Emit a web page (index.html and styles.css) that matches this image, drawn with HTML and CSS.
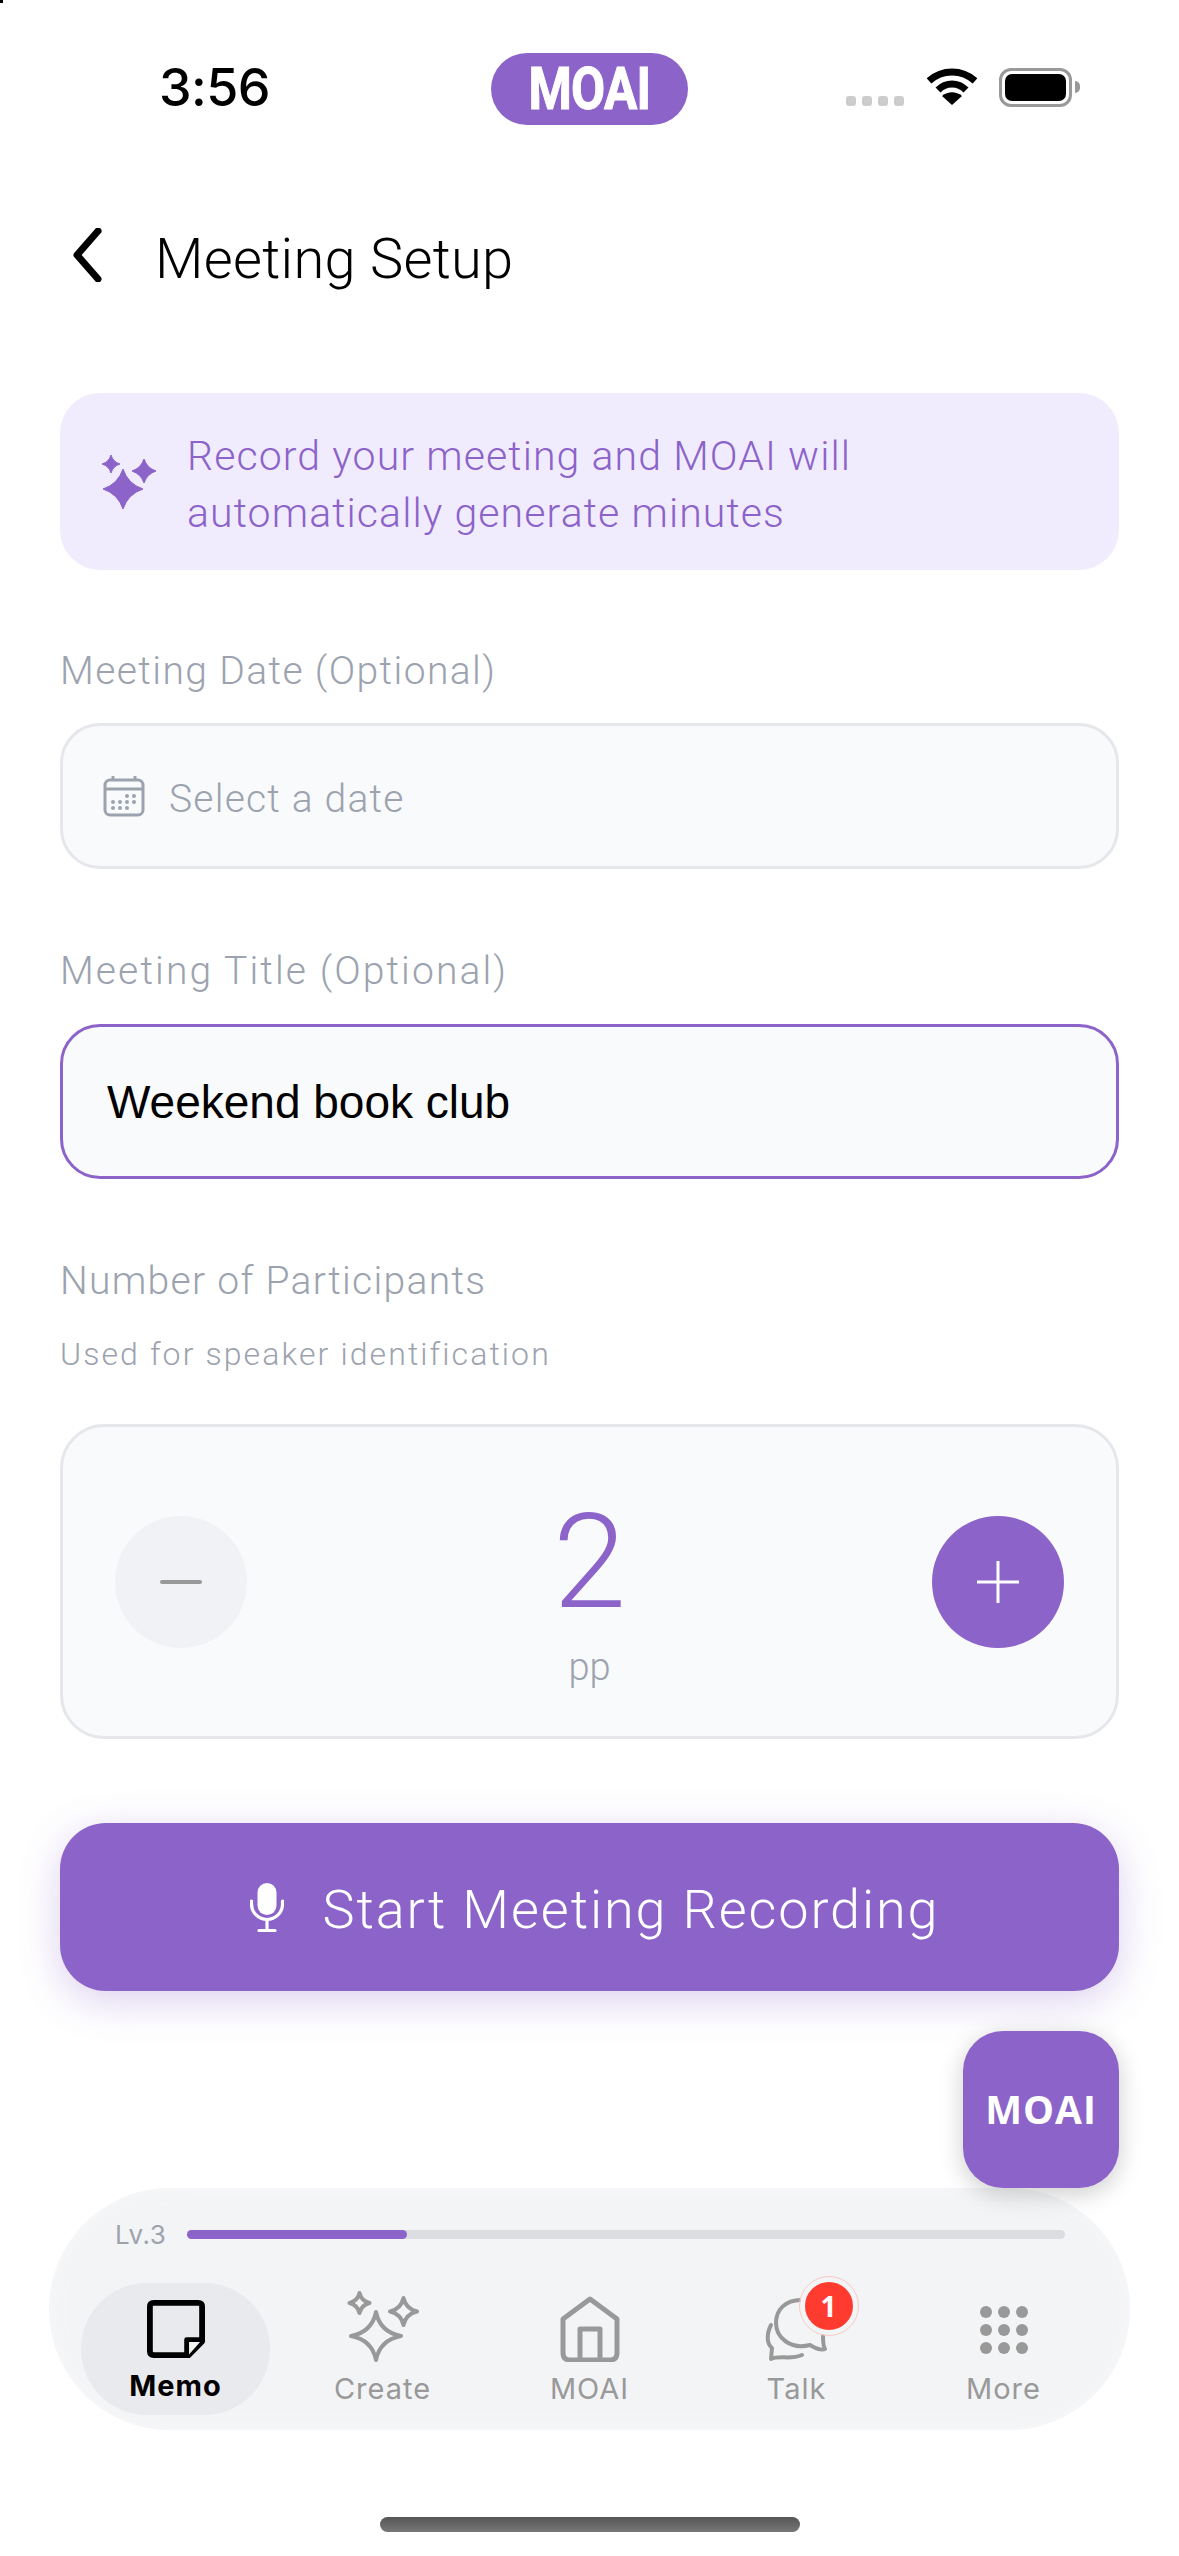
FILE: index.html
```html
<!DOCTYPE html>
<html lang="en">
<head>
  <meta charset="UTF-8" />
  <meta name="viewport" content="width=device-width, initial-scale=1.0"/>
  <title>Meeting Setup</title>
  <link rel="stylesheet" href="styles.css">
</head>
<body>
  <div class="pixel"></div>
  <div class="status-bar">
    <div class="hora">3:56</div>
    <div class="logo-pill"><span>MOAI</span></div>
    <div class="status-icons">
      <div class="senal"><i></i><i></i><i></i><i></i></div>
      <svg class="wifi" width="50" height="38" viewBox="0 0 50 38">
        <path d="M2 13 C15 1 35 1 48 13" fill="none" stroke="#000" stroke-width="7"/>
        <path d="M11 22 C19 14 31 14 39 22" fill="none" stroke="#000" stroke-width="7"/>
        <path d="M25 37 L15 28 C21 23 29 23 35 28 Z" fill="#000"/>
      </svg>
      <div class="bateria"><div class="bateria-fill"></div></div>
      <div class="bateria-tip"></div>
    </div>
  </div>

  <header class="cabecera">
    <svg width="30" height="54" viewBox="0 0 30 54"><path d="M26 3 L5 27 L26 51" fill="none" stroke="#000" stroke-width="7" stroke-linecap="round" stroke-linejoin="round"/></svg>
    <h1>Meeting Setup</h1>
  </header>

  <main class="contenedor">
    <div class="aviso">
      <svg width="54" height="54" viewBox="0 0 54 54" fill="#8c63c9" stroke="#8c63c9" stroke-width="1" stroke-linejoin="round">
        <path d="M21 14 Q26 29 41 34 Q26 39 21 54 Q16 39 1 34 Q16 29 21 14 Z"/>
        <path d="M9 0 Q11 7 18 9 Q11 11 9 18 Q7 11 0 9 Q7 7 9 0 Z"/>
        <path d="M42 4 Q45 13 54 16 Q45 19 42 28 Q39 19 30 16 Q39 13 42 4 Z"/>
      </svg>
      <p>Record your meeting and MOAI will<br>automatically generate minutes</p>
    </div>

    <label class="etiqueta etiqueta-fecha">Meeting Date (Optional)</label>
    <div class="campo campo-fecha">
      <svg width="42" height="42" viewBox="0 0 42 42" fill="none" stroke="#9ca3af" stroke-width="3">
        <rect x="2" y="5" width="38" height="35" rx="5"/>
        <path d="M2 14 H40 M10 1 V6 M32 1 V6"/>
        <g fill="#9ca3af" stroke="none">
          <circle cx="24" cy="21" r="2"/><circle cx="31" cy="21" r="2"/>
          <circle cx="10" cy="27" r="2"/><circle cx="17" cy="27" r="2"/><circle cx="24" cy="27" r="2"/><circle cx="31" cy="27" r="2"/>
          <circle cx="10" cy="33" r="2"/><circle cx="17" cy="33" r="2"/><circle cx="24" cy="33" r="2"/>
        </g>
      </svg>
      <span>Select a date</span>
    </div>

    <label class="etiqueta etiqueta-titulo">Meeting Title (Optional)</label>
    <div class="campo campo-titulo">Weekend book club</div>

    <label class="etiqueta etiqueta-numero">Number of Participants</label>
    <div class="ayuda">Used for speaker identification</div>

    <div class="contador">
      <div class="redondo redondo-menos"><svg width="42" height="6" viewBox="0 0 42 6"><rect width="42" height="4" y="1" rx="2" fill="#999"/></svg></div>
      <div class="contador-valor">
        <div class="numero">2</div>
        <div class="unidad">pp</div>
      </div>
      <div class="redondo redondo-mas"><svg width="42" height="42" viewBox="0 0 42 42"><path d="M0 21 H42 M21 0 V42" stroke="#fff" stroke-width="3"/></svg></div>
    </div>

    <button class="btn-grabar">
      <svg width="34" height="49" viewBox="0 0 34 49" fill="none">
        <rect x="7.5" y="0" width="19" height="32" rx="9.5" fill="#fff"/>
        <path d="M1.5 18 V21 A15.5 15.5 0 0 0 32.5 21 V18 M17 37 V47 M9 47.5 H25" stroke="#fff" stroke-width="3.2" stroke-linecap="round"/>
      </svg>
      <span>Start Meeting Recording</span>
    </button>
  </main>

  <div class="fab">MOAI</div>

  <nav class="barra-nav">
    <div class="nivel">
      <span>Lv.3</span>
      <div class="nivel-barra"><div class="nivel-fill"></div></div>
    </div>
    <div class="pestanas">
      <div class="pestana activa">
        <svg width="58" height="58" viewBox="0 0 60 60" fill="none" stroke="#000" stroke-width="6" stroke-linejoin="round">
          <path d="M7 3 H53 Q57 3 57 7 V43 L43 57 H7 Q3 57 3 53 V7 Q3 3 7 3 Z"/>
          <path d="M57 41 L43 57 V41 Z" fill="#f3f4f6" stroke="none"/>
          <path d="M57 41 H41 V57" stroke-width="5"/>
        </svg>
        <span>Memo</span>
      </div>
      <div class="pestana">
        <svg width="72" height="71" viewBox="0 0 72 71" fill="none" stroke="#999" stroke-width="4" stroke-linejoin="round">
          <path d="M29 21 Q33 41 54 45 Q33 49 29 69 Q25 49 4 45 Q25 41 29 21 Z"/>
          <path d="M12.5 2 Q14.5 10 22.5 12 Q14.5 14 12.5 22 Q10.5 14 2.5 12 Q10.5 10 12.5 2 Z"/>
          <path d="M56.5 7 Q59 18 70 20.5 Q59 23 56.5 34 Q54 23 43 20.5 Q54 18 56.5 7 Z"/>
        </svg>
        <span>Create</span>
      </div>
      <div class="pestana">
        <svg width="60" height="66" viewBox="0 0 60 66" fill="none" stroke="#999" stroke-width="5" stroke-linejoin="round">
          <path d="M30 3 L57 23 V57 Q57 64 50 64 H10 Q3 64 3 57 V23 Z"/>
          <path d="M20 64 V33 H40 V64"/>
        </svg>
        <span>MOAI</span>
      </div>
      <div class="pestana">
        <div class="icono-charla">
          <svg width="64" height="64" viewBox="0 0 64 64" fill="none" stroke="#999" stroke-width="4" stroke-linecap="round" stroke-linejoin="round">
            <path d="M36 2 C20 2 11 12 11 25 C11 40 26 52 45 47 C50 50 56 53 60 51 C58 48 58 44 58 38"/>
            <path d="M6 27 C1 37 2 46 7 50 L6 61 C14 57 26 62 37 57"/>
          </svg>
          <div class="globo">1</div>
        </div>
        <span>Talk</span>
      </div>
      <div class="pestana">
        <div class="puntos"><i></i><i></i><i></i><i></i><i></i><i></i><i></i><i></i><i></i></div>
        <span>More</span>
      </div>
    </div>
  </nav>

  <div class="home-indicator"></div>
</body>
</html>
```

FILE: styles.css
```css
/* ===== Base ===== */
* { margin:0; padding:0; box-sizing:border-box; }
html, body { height:100%; overflow:hidden; }
body {
  position:relative;
  background:#fff; color:#000;
  font-family:'Roboto', sans-serif;
  font-weight:300;
}
.pixel { position:absolute; left:0; top:0; width:3px; height:3px; background:#000; }

/* ===== Status bar ===== */
.status-bar { height:180px; padding:53px 98px 0 159px; display:flex; align-items:flex-start; }
.hora { font:500 52px/70px 'Inter', sans-serif; width:332px; letter-spacing:-.6px; }
.logo-pill {
  width:197px; height:72px; border-radius:36px;
  background:#8c63c9; color:#fff;
  display:flex; align-items:center; justify-content:center;
  font:700 59px/72px 'Roboto', sans-serif;
}
.logo-pill span { display:inline-block; transform:scaleX(.84); letter-spacing:-1px; -webkit-text-stroke:1px #fff; }
.status-icons { margin-left:158px; margin-top:15px; display:flex; align-items:flex-start; }
.senal { display:flex; gap:6px; margin-top:28px; margin-right:23px; }
.senal i { width:10px; height:10px; border-radius:3px; background:#ccc; }
.wifi { margin-right:22px; }
.bateria {
  width:73px; height:39px; padding:3px;
  border:3px solid #999; border-radius:12px; background:#fff;
}
.bateria-fill { width:100%; height:100%; background:#000; border-radius:7px; }
.bateria-tip { width:5px; height:12px; background:#999; border-radius:0 6px 6px 0; margin:13px 0 0 3px; }

/* ===== Cabecera ===== */
.cabecera { display:flex; align-items:center; gap:53px; padding:0 0 0 72px; height:110px; margin-top:20px; }
.cabecera h1 { font-size:56px; font-weight:300; letter-spacing:.3px; padding-top:8px; }

/* ===== Formulario ===== */
.contenedor { padding:0 60px; margin-top:83px; }
.aviso {
  display:flex; align-items:center; gap:31px;
  height:177px; padding:6px 0 0 42px;
  background:#f1ecfd; border-radius:40px;
  color:#8c63c9; font-size:41px; line-height:57px; letter-spacing:1.1px;
}
.aviso svg { margin-top:-6px; }
.etiqueta { display:block; color:#9ca3af; font-size:39px; line-height:46px; }
.etiqueta-fecha { margin-top:78px; letter-spacing:1.4px; }
.etiqueta-titulo { margin-top:79px; letter-spacing:2.1px; }
.etiqueta-numero { margin-top:79px; letter-spacing:1.3px; }
.campo {
  display:flex; align-items:center;
  background:#f9fafb; border:3px solid #e5e7eb; border-radius:40px;
}
.campo-fecha { height:146px; margin-top:29px; padding-left:40px; gap:24px; color:#9ca3af; font-size:39px; letter-spacing:1.2px; }
.campo-fecha span { padding-top:6px; }
.campo-titulo {
  height:155px; margin-top:30px; padding-left:44px;
  border-color:#8c63c9; font:400 46px 'Liberation Sans', sans-serif;
}
.ayuda { color:#9ca3af; font-size:32px; line-height:40px; margin-top:30px; letter-spacing:2.1px; }

.contador {
  display:flex; align-items:center; justify-content:space-between;
  height:315px; margin-top:50px; padding:0 52px;
  background:#f9fafb; border:3px solid #e5e7eb; border-radius:44px;
}
.redondo { width:132px; height:132px; border-radius:50%; display:flex; align-items:center; justify-content:center; }
.redondo-menos { background:#f1f2f5; }
.redondo-mas { background:#8c63c9; }
.contador-valor { text-align:center; padding-top:25px; }
.numero { color:#8c63c9; font-size:132px; line-height:130px; font-weight:300; }
.unidad { color:#9ca3af; font-size:38px; line-height:50px; margin-top:15px; }

.btn-grabar {
  display:flex; align-items:center; justify-content:center; gap:39px;
  width:100%; height:168px; margin-top:84px; padding-left:10px;
  background:#8c63c9; color:#fff; border:none; border-radius:46px;
  font-family:inherit; font-weight:300; font-size:54px; letter-spacing:1.9px;
  box-shadow:0 10px 40px rgba(140,99,201,.3);
}
.btn-grabar span { padding-top:4px; }

/* ===== Flotante y navegación ===== */
.fab {
  position:absolute; left:963px; top:2031px;
  width:156px; height:157px; border-radius:40px;
  background:#8c63c9; color:#fff;
  font:700 39px/155px 'Open Sans', sans-serif;
  text-align:center; letter-spacing:1px;
  box-shadow:0 6px 24px rgba(0,0,0,.2);
  z-index:2;
}
.barra-nav {
  position:absolute; left:49px; top:2188px;
  width:1081px; height:242px; border-radius:121px;
  background:#f3f4f6;
  box-shadow:inset 0 0 24px #f7f8f8;
  padding:34px 23px 0;
}
.nivel { display:flex; align-items:center; gap:21px; padding:0 42px 0 43px; height:25px; color:#9ca3af; font:400 26px 'Inter', sans-serif; letter-spacing:.5px; }
.nivel-barra { flex:1; height:9px; border-radius:5px; background:#dcdde1; }
.nivel-fill { width:25%; height:100%; border-radius:5px; background:#8c63c9; }
.pestanas { display:grid; grid-template-columns:repeat(5,207px); margin-top:36px; }
.pestana {
  display:flex; flex-direction:column; align-items:center; justify-content:flex-end;
  height:132px; padding-bottom:8px;
  color:#999; font:400 29px/36px 'Inter', sans-serif; letter-spacing:1px;
}
.pestana svg { display:block; margin-bottom:9px; }
.pestana.activa {
  width:189px; justify-self:center;
  background:#e9eaed; border-radius:66px; color:#000; font-weight:700; padding-bottom:11px;
}
.pestana.activa svg { margin-bottom:10px; }
.icono-charla { position:relative; }
.globo {
  position:absolute; left:35px; top:-21px;
  width:58px; height:58px; border-radius:50%;
  background:#ff3b30; color:#fff;
  border:5px solid #f3f4f6; outline:1px solid #fbc9c5;
  font:700 28px/48px 'Open Sans', sans-serif;
  text-align:center; letter-spacing:0;
}
.puntos { display:grid; grid-template-columns:repeat(3,12px); gap:6px; margin-bottom:17px; }
.puntos i { width:12px; height:12px; border-radius:50%; background:#999; }

.home-indicator {
  position:absolute; left:380px; top:2517px;
  width:420px; height:15px; border-radius:8px;
  background:linear-gradient(#555,#777);
}
```
